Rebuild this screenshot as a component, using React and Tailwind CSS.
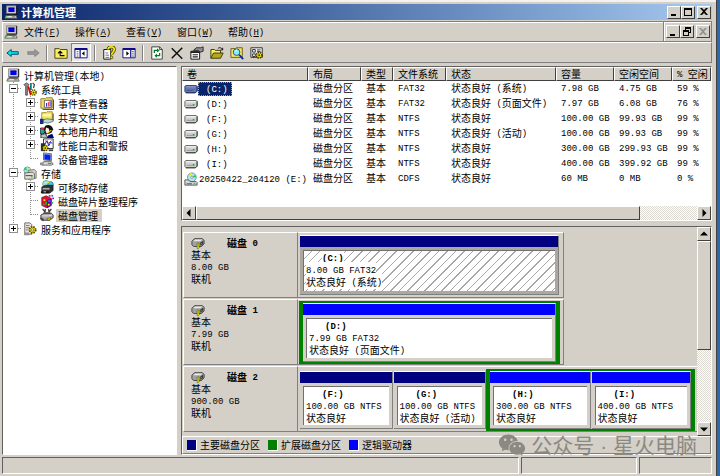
import React from "react";
import clsx from "clsx";
import { AiFillWechat } from "react-icons/ai";

const raised =
  "border border-t-white border-l-white border-b-[#404040] border-r-[#404040] bg-[#d4d0c8]";
const sunken =
  "border border-t-[#606060] border-l-[#606060] border-b-white border-r-white";
const track =
  "bg-[repeating-conic-gradient(#ffffff_0_25%,#dcd9d2_0_50%)] bg-[length:2px_2px]";

// Latin runs use a narrower monospace face than the Chinese text around them
const latin = "font-['Liberation_Mono',monospace] align-[1px] text-[9px] leading-none";

function T({ children }) {
  return children
    .split(/([\x20-\x7e]+)/)
    .filter(Boolean)
    .map((part, i) =>
      /^[\x20-\x7e]/.test(part) ? (
        <span key={i} className={latin}>
          {part}
        </span>
      ) : (
        <span key={i}>{part}</span>
      )
    );
}

function Svg({ children, className = "size-3.5" }) {
  return (
    <svg viewBox="0 0 16 16" className={clsx("block shrink-0", className)} aria-hidden="true">
      {children}
    </svg>
  );
}

const ComputerIcon = ({ className }) => (
  <Svg className={className}>
    <path d="M3 1h11v9H3z" fill="#d4d0c8" stroke="#808080" />
    <path d="M14.5 1v9.5H3" fill="none" stroke="#000" />
    <path d="M5 3h7v5H5z" fill="#0000f0" />
    <path d="M5 3h7v1H5z" fill="#000080" />
    <path d="M6 11h6v1H6z" fill="#404040" />
    <path d="M2 12h12l1 3H1z" fill="#e4e0d8" stroke="#404040" strokeWidth=".8" />
    <path d="M2 13h2v1H2z" fill="#00e000" />
    <path d="M9 13.5h4" stroke="#606060" />
  </Svg>
);

const ToolsIcon = () => (
  <Svg>
    <path d="M1 3l3-2 3 2-2 2v10H3V5z" fill="#909090" stroke="#303030" strokeWidth=".8" />
    <path d="M8 1h2v8H8z" fill="#008080" />
    <path d="M6 5l3 10" stroke="#e00000" strokeWidth="2" />
    <path d="M11 1l2 2-1 4" stroke="#404040" fill="none" strokeWidth="1.4" />
    <circle cx="12" cy="12" r="3" fill="#f0e000" stroke="#404000" strokeDasharray="1.4 1" strokeWidth="1.6" />
    <circle cx="12" cy="12" r="1" fill="#404000" />
  </Svg>
);

const EventIcon = () => (
  <Svg>
    <path d="M1 3h5l1-1h7v12H1z" fill="#f4dc60" stroke="#907820" />
    <path d="M5 5h8v8H5z" fill="#fff" stroke="#606060" />
    <path d="M7.500 8v4" stroke="#0000d0" />
    <path d="M9.500 7v5" stroke="#e00000" />
    <path d="M11.500 6v6" stroke="#0000d0" />
    <path d="M15.500 4v11.500H3" fill="none" stroke="#303000" />
  </Svg>
);

const ShareIcon = () => (
  <Svg>
    <path d="M2 3h5l1-1h6v9H2z" fill="#f8e468" stroke="#a08820" />
    <path d="M3 5h10v2H3z" fill="#fffbc0" />
    <path d="M15 4v8H7" fill="none" stroke="#303000" />
    <path d="M0 10h4v6H0z" fill="#103080" />
    <path d="M4 11l4-1 7 1v2l-6 2-5-1z" fill="#b8d8d0" stroke="#305060" strokeWidth=".7" />
  </Svg>
);

const UsersIcon = () => (
  <Svg>
    <path d="M6 2c3-2 8-1 9 4l-2 4-6 2-4-4z" fill="#101010" />
    <path d="M7 4l3 1 1 4-3 2-2-3z" fill="#f4f4e8" />
    <path d="M0 5h4l2 4-3 3-3-1z" fill="#20a0a0" stroke="#000" strokeWidth=".8" />
    <path d="M1 4h4v2H1z" fill="#e02020" />
    <path d="M1 12l5-1 3 5H1z" fill="#c0c0c0" stroke="#000" strokeWidth=".8" />
    <path d="M9 13l5-2 2 5H8z" fill="#000080" />
    <path d="M9 10l4-3" stroke="#f0d000" strokeWidth="1.2" />
  </Svg>
);

const PerfIcon = () => (
  <Svg>
    <path d="M4 1h11v11H4z" fill="#fff" stroke="#202020" />
    <path d="M5 8l3-5 2 6 2-4 2 1" fill="none" stroke="#0000d0" />
    <path d="M6 3l4 3 3-3" fill="none" stroke="#e00000" />
    <path d="M1 6h5v9H1z" fill="#303020" />
    <circle cx="6" cy="11.500" r="3" fill="#f0e000" stroke="#303000" strokeDasharray="1.500 1" strokeWidth="1.600" />
    <circle cx="6" cy="11.500" r="1" fill="#303000" />
    <path d="M10 13h5v2h-5z" fill="#404040" />
  </Svg>
);

const DeviceIcon = () => (
  <Svg>
    <path d="M4 1l9 1v8l-9-1z" fill="#c8c8d0" stroke="#606060" />
    <path d="M5 2.500l7 .5v6l-7-.5z" fill="#0020f0" />
    <path d="M4 11h9l2 3-2 1H2z" fill="#d8d8d8" stroke="#404040" strokeWidth=".8" />
    <path d="M0 12h4v3H0z" fill="#909090" />
    <path d="M9 13h4" stroke="#00a000" />
  </Svg>
);

const StorageIcon = () => (
  <Svg>
    <circle cx="5" cy="5" r="4" fill="#b0e8e0" stroke="#408080" strokeWidth=".7" />
    <path d="M5 5l3-3 1 2z" fill="#f0f000" />
    <path d="M5 5L1 4l2-3z" fill="#20d060" />
    <path d="M6 5l7-1 2 2v8l-9 1z" fill="#d8d4cc" stroke="#505050" strokeWidth=".8" />
    <path d="M2 8l9-1 2 2v5l-1 1H2z" fill="#e4e0d8" stroke="#404040" strokeWidth=".8" />
    <path d="M3 11h8" stroke="#303030" />
    <path d="M9 12.500h2" stroke="#00a000" />
  </Svg>
);

const RemovableIcon = () => (
  <Svg>
    <circle cx="7" cy="4.500" r="4" fill="#a0e8e0" stroke="#308080" strokeWidth=".7" />
    <circle cx="12" cy="5" r="3.200" fill="#40c8f0" stroke="#206080" strokeWidth=".7" />
    <path d="M7 4l2-3 2 2z" fill="#f0f020" />
    <path d="M2 8l4-2h9v6l-4 3H2z" fill="#303030" stroke="#000" strokeWidth=".6" />
    <path d="M3 9h8v2H3z" fill="#a8a8a8" />
    <path d="M1 13h9v2H1z" fill="#101010" />
    <path d="M4 13.500h3" stroke="#e0e0e0" />
  </Svg>
);

const DefragIcon = () => (
  <Svg>
    <path d="M2 4l5-2 6 3v8l-5 3-6-3z" fill="#e01030" stroke="#700020" strokeWidth=".7" />
    <path d="M8 7l5-2v8l-5 3z" fill="#7000a0" />
    <path d="M4 6h2v2H4zM9 11h2v2H9z" fill="#f0f000" />
    <path d="M6 9h2v3H6zM3 11h2v2H3z" fill="#00c040" />
    <path d="M9 7h3v2H9z" fill="#3060ff" />
    <path d="M10 1h2v2h-2zM14 4h2v2h-2z" fill="#e000c0" />
    <path d="M13 1h2v2h-2z" fill="#0080e0" />
    <path d="M13 9h2v2h-2z" fill="#00b060" />
  </Svg>
);

const DiskMgmtIcon = () => (
  <Svg>
    <path d="M3 1l3 4M13 1l-3 4M6 1v3M10 1v3" stroke="#303030" strokeWidth="1.300" />
    <path d="M4 5h8v2H4z" fill="#703030" />
    <path d="M1 8l4-2h8l2 2v3l-4 3H3l-2-2z" fill="#a8a8a8" stroke="#202020" strokeWidth=".9" />
    <path d="M2 9h8l4-1" fill="none" stroke="#f0f0f0" />
    <path d="M0 11l4 1v3l-3-1z" fill="#404040" />
    <path d="M8 12l4-1v2l-3 1z" fill="#e8e000" stroke="#404000" strokeWidth=".6" />
  </Svg>
);

const ServicesIcon = () => (
  <Svg>
    <path d="M2 1h6l2 2v11H2z" fill="#e8e4dc" stroke="#606060" />
    <path d="M3.500 4h4M3.500 6.500h4M3.500 9h3" stroke="#707070" />
    <path d="M2 12h5v3H1z" fill="#909090" />
    <circle cx="11" cy="9" r="3.500" fill="#f0e000" stroke="#504800" strokeDasharray="1.700 1.100" strokeWidth="2" />
    <circle cx="11" cy="9" r="1.300" fill="#fff" stroke="#504800" strokeWidth=".7" />
  </Svg>
);

function VolumeIcon({ selected }) {
  return (
    <Svg>
      <path
        d="M2 4h12l1 1v5l-2 2H2l-1-1V5z"
        fill={selected ? "#6878b0" : "#d0d0d0"}
        stroke={selected ? "#283870" : "#606060"}
      />
      <path d="M2.500 5.500h11" stroke={selected ? "#98a4d0" : "#fff"} />
      <path d="M3 9.500h7" stroke={selected ? "#384880" : "#909090"} />
      <path d="M10 8h2v2h-2z" fill={selected ? "#507090" : "#40a040"} />
      <path d="M15 5v5.500L13 12.500H2" fill="none" stroke={selected ? "#182858" : "#303030"} />
    </Svg>
  );
}

const CdIcon = () => (
  <Svg>
    <circle cx="9" cy="6" r="5" fill="#b0e8e8" stroke="#408090" strokeWidth=".8" />
    <path d="M9 6L6 2l3-1z" fill="#f0f000" />
    <path d="M9 6l4-3 1 3z" fill="#20d040" />
    <circle cx="9" cy="6" r="1.300" fill="#fff" stroke="#606060" strokeWidth=".6" />
    <path d="M1 9h4l2 2h7l1 1v3H1z" fill="#d8d8d8" stroke="#404040" strokeWidth=".9" />
    <path d="M3 13.500h6" stroke="#404040" />
    <path d="M11 13h2v1h-2z" fill="#00a000" />
  </Svg>
);

const DiskIcon = () => (
  <Svg>
    <path d="M1 6l3-3h9l2 2v4l-3 3H3L1 10z" fill="#a0a0a0" stroke="#303030" strokeWidth=".9" />
    <path d="M3 5.500l2-1.500h8l-2 2H3z" fill="#e8e8e8" />
    <path d="M10 8l4-3v4l-3 2.500z" fill="#404040" />
    <path d="M11 8h1.500v1.500H11z" fill="#00c000" />
    <path d="M7 8h2v4l1 1-2 1.500H7z" fill="#f0e000" stroke="#505000" strokeWidth=".6" />
  </Svg>
);

const TOOLS = [
  [
    { label: "后退", icon: <path d="M1 8l5-4v2.500h8v3H6V12z" fill="#00e8f0" stroke="#004060" /> },
    { label: "前进", icon: <path d="M15 8l-5-4v2.500H2v3h8V12z" fill="#989898" stroke="#808080" /> },
  ],
  [
    {
      label: "向上",
      icon: (
        <>
          <path d="M1 3h5l1 1h8v10H1z" fill="#f8f060" stroke="#403800" />
          <path d="M7 11V7M4.500 8.500L7 6l2.500 2.500M7 11h5" fill="none" stroke="#000" strokeWidth="1.300" />
        </>
      ),
    },
    {
      label: "显示/隐藏控制台树",
      pressed: true,
      icon: (
        <>
          <path d="M1 3h14v10.500H1z" fill="#fff" stroke="#000080" />
          <path d="M1 2.500h14v2H1z" fill="#000080" />
          <path d="M7 4v9" stroke="#000080" strokeWidth="1.300" />
          <path d="M3 6.500h2M3 9h2M3 11.500h2" stroke="#404040" />
          <path d="M12 6v5L9 8.500z" fill="#000" />
        </>
      ),
    },
  ],
  [
    {
      label: "帮助",
      icon: (
        <>
          <path d="M2 4h8v11H2z" fill="#fff" stroke="#000" />
          <path d="M4 8h3M4 10.500h4M4 13h4" stroke="#606060" />
          <path d="M7 4c0-4 7-4 7 0 0 3-3 3-3 6" fill="none" stroke="#303000" strokeWidth="3.600" />
          <path d="M7 4c0-4 7-4 7 0 0 3-3 3-3 6" fill="none" stroke="#f8e800" strokeWidth="2" />
          <circle cx="11" cy="13" r="1.500" fill="#f8e800" stroke="#303000" strokeWidth=".8" />
        </>
      ),
    },
    {
      label: "显示/隐藏操作窗格",
      icon: (
        <>
          <path d="M1 3h14v10.500H1z" fill="#fff" stroke="#000080" />
          <path d="M1 2.500h14v2H1z" fill="#000080" />
          <path d="M10 4v9" stroke="#000080" strokeWidth="1.300" />
          <path d="M11.500 6.500h2M11.500 9h2M11.500 11.500h2" stroke="#404040" />
          <path d="M5 6v5l3-2.500z" fill="#000" />
        </>
      ),
    },
  ],
  [
    {
      label: "刷新",
      icon: (
        <>
          <path d="M2 1h9l3 3v11H2z" fill="#fff" stroke="#303030" />
          <path d="M11 1v3h3" fill="none" stroke="#303030" />
          <path d="M5 8V5h4M11 8v3H7" fill="none" stroke="#008020" strokeWidth="1.500" />
          <path d="M8 2.500L11 5 8 7.500zM8 8.500L5 11l3 2.500z" fill="#008020" />
        </>
      ),
    },
    {
      label: "删除",
      icon: <path d="M2 2.500l12 12M14 2L2 14" stroke="#101010" strokeWidth="1.700" />,
    },
    {
      label: "属性",
      icon: (
        <>
          <path d="M1 6h10v9H1z" fill="#fff" stroke="#000" />
          <path d="M1 6h10v2H1z" fill="#202020" />
          <path d="M3 10h6M3 12.500h6" stroke="#202020" strokeWidth="1.300" />
          <path d="M4 5l3-3h5l3-1v5l-3 1-3-2H7z" fill="#909090" stroke="#202020" />
        </>
      ),
    },
    {
      label: "打开",
      icon: (
        <>
          <path d="M1 14V4h4l1 1h6v3" fill="#f8f060" stroke="#303000" />
          <path d="M1 14l3-6h11l-3 6z" fill="#b8a820" stroke="#303000" />
          <path d="M9 3c2-2 4-1 5 1M14.500 2v2.500H12" fill="none" stroke="#000" />
        </>
      ),
    },
    {
      label: "查找",
      icon: (
        <>
          <path d="M1 3h5l1-1h7v11H1z" fill="#f8e860" stroke="#605010" />
          <circle cx="7.500" cy="7" r="3.800" fill="#80f0f8" stroke="#204080" />
          <path d="M6 6l2-1.500" stroke="#fff" />
          <path d="M10.500 10l4.500 5" stroke="#0020c0" strokeWidth="2" />
        </>
      ),
    },
    {
      label: "设置",
      icon: (
        <>
          <path d="M1 2h13v11H1z" fill="#f0f0f0" stroke="#202020" />
          <path d="M3 4h3v3H3zM3 9h3v3H3z" fill="#fff" stroke="#202020" />
          <path d="M8 4.500h4M8 6.500h4" stroke="#202020" />
          <circle cx="10.500" cy="10.500" r="3.200" fill="#f0e000" stroke="#403800" strokeDasharray="1.600 1" strokeWidth="1.800" />
          <circle cx="10.500" cy="10.500" r="1.100" fill="#403800" />
        </>
      ),
    },
  ],
];

const MENUS = [
  ["文件", "F"],
  ["操作", "A"],
  ["查看", "V"],
  ["窗口", "W"],
  ["帮助", "H"],
];

// guides: one entry per indent column. "line" passes through, "tee"/"end" branch off
const TREE = [
  { text: "计算机管理(本地)", icon: <ComputerIcon />, guides: [] },
  { text: "系统工具", icon: <ToolsIcon />, guides: ["tee"], sign: "-" },
  { text: "事件查看器", icon: <EventIcon />, guides: ["line", "tee"], sign: "+" },
  { text: "共享文件夹", icon: <ShareIcon />, guides: ["line", "tee"], sign: "+" },
  { text: "本地用户和组", icon: <UsersIcon />, guides: ["line", "tee"], sign: "+" },
  { text: "性能日志和警报", icon: <PerfIcon />, guides: ["line", "tee"], sign: "+" },
  { text: "设备管理器", icon: <DeviceIcon />, guides: ["line", "end"] },
  { text: "存储", icon: <StorageIcon />, guides: ["tee"], sign: "-" },
  { text: "可移动存储", icon: <RemovableIcon />, guides: ["line", "tee"], sign: "+" },
  { text: "磁盘碎片整理程序", icon: <DefragIcon />, guides: ["line", "tee"] },
  { text: "磁盘管理", icon: <DiskMgmtIcon />, guides: ["line", "end"], selected: true },
  { text: "服务和应用程序", icon: <ServicesIcon />, guides: ["end"], sign: "+" },
];

const COLUMNS = ["卷", "布局", "类型", "文件系统", "状态", "容量", "空闲空间", "% 空闲"];

const VOLUMES = [
  ["(C:)", "磁盘分区", "基本", "FAT32", "状态良好 (系统)", "7.98 GB", "4.75 GB", "59 %"],
  ["(D:)", "磁盘分区", "基本", "FAT32", "状态良好 (页面文件)", "7.97 GB", "6.08 GB", "76 %"],
  ["(F:)", "磁盘分区", "基本", "NTFS", "状态良好", "100.00 GB", "99.93 GB", "99 %"],
  ["(G:)", "磁盘分区", "基本", "NTFS", "状态良好 (活动)", "100.00 GB", "99.93 GB", "99 %"],
  ["(H:)", "磁盘分区", "基本", "NTFS", "状态良好", "300.00 GB", "299.93 GB", "99 %"],
  ["(I:)", "磁盘分区", "基本", "NTFS", "状态良好", "400.00 GB", "399.92 GB", "99 %"],
  ["20250422_204120 (E:)", "磁盘分区", "基本", "CDFS", "状态良好", "60 MB", "0 MB", "0 %"],
];

const LEGEND = [
  ["主要磁盘分区", "bg-[#000080]"],
  ["扩展磁盘分区", "bg-[#008000]"],
  ["逻辑驱动器", "bg-[#0000ff]"],
];

const CAPTION_GLYPHS = {
  最小化: <path d="M2 7h5v2H2z" />,
  最大化: <path d="M1 1h8v8H1zM2 3v5h6V3z" fillRule="evenodd" />,
  还原: <path d="M3 0h6v6H7v3H1V3h2zM4 2v1h3v2h1V2zM2 5v3h4V5z" fillRule="evenodd" />,
  关闭: <path d="M1 1h2l2 2 2-2h2L6 4.500 9 8H7L5 6 3 8H1l3-3.500z" />,
};

function CaptionButton({ label, name, disabled, className }) {
  return (
    <button
      type="button"
      aria-label={name}
      disabled={disabled}
      className={clsx("flex h-[13px] w-3.5 items-center justify-center", raised, className)}
    >
      <svg viewBox="0 0 10 10" className={clsx("size-2.5", disabled ? "fill-[#909090]" : "fill-black")}>
        {CAPTION_GLYPHS[label]}
      </svg>
    </button>
  );
}

function ScrollButton({ label, path }) {
  return (
    <button
      type="button"
      aria-label={label}
      className={clsx("flex size-3.5 shrink-0 items-center justify-center", raised)}
    >
      <svg viewBox="0 0 8 8" className="size-2">
        <path d={path} />
      </svg>
    </button>
  );
}

function Guide({ type, sign, text }) {
  const drawing = (
    <svg viewBox="0 0 17 14" className="block h-3.5 w-[17px]" shapeRendering="crispEdges" aria-hidden="true">
      <path
        d={type === "end" ? "M8.500 0v7" : "M8.500 0v14"}
        stroke="#909090"
        strokeDasharray="1 1"
      />
      {type !== "line" && <path d="M9 6.500h8" stroke="#909090" strokeDasharray="1 1" />}
      {sign && (
        <>
          <path d="M4 2h9v9H4z" fill="#909090" />
          <path d="M5 3h7v7H5z" fill="#fff" />
          <path d="M6 6h5v1H6z" fill="#000" />
          {sign === "+" && <path d="M8 4h1v5H8z" fill="#000" />}
        </>
      )}
    </svg>
  );
  if (!sign) return drawing;
  return (
    <button type="button" aria-label={(sign === "+" ? "展开" : "折叠") + text}>
      {drawing}
    </button>
  );
}

function Tree() {
  return (
    <ul className={clsx("w-[175px] shrink-0 bg-white pt-px pl-0.5", sunken)}>
      {TREE.map((node) => (
        <li key={node.text} className="flex h-3.5 items-center">
          {node.guides.map((type, i) => (
            <Guide
              key={i}
              type={type}
              text={node.text}
              sign={i === node.guides.length - 1 ? node.sign : undefined}
            />
          ))}
          <span className="ml-px">{node.icon}</span>
          <span className={clsx("ml-0.5 px-0.5 leading-[13px]", node.selected && "bg-[#d4d0c8] pr-1")}>
            <T>{node.text}</T>
          </span>
        </li>
      ))}
    </ul>
  );
}

function VolumeList() {
  return (
    <section className={clsx("flex h-[155px] flex-col bg-white", sunken)}>
      <table className="w-full table-fixed border-collapse text-left">
        <colgroup>
          <col className="w-[126px]" />
          <col className="w-[53px]" />
          <col className="w-8" />
          <col className="w-[53px]" />
          <col className="w-[110px]" />
          <col className="w-[58px]" />
          <col className="w-[58px]" />
          <col />
        </colgroup>
        <thead>
          <tr>
            {COLUMNS.map((c) => (
              <th key={c} className="p-0 font-normal">
                <div className={clsx("h-3.5 overflow-hidden pl-1 leading-3", raised)}>
                  <T>{c}</T>
                </div>
              </th>
            ))}
          </tr>
        </thead>
        <tbody>
          {VOLUMES.map(([name, ...cells], row) => (
            <tr key={name}>
              <td className="p-0">
                <div className="flex h-[15px] items-center pl-0.5">
                  {name.length > 4 ? <CdIcon /> : <VolumeIcon selected={row === 0} />}
                  <span
                    className={clsx(
                      "leading-[14px]",
                      name.length > 4 ? "pl-px" : "pr-1 pl-2",
                      row === 0 && "bg-[#0a246a] text-white outline-1 -outline-offset-1 outline-dotted outline-[#c0a850]"
                    )}
                  >
                    <T>{name}</T>
                  </span>
                </div>
              </td>
              {cells.map((cell, i) => (
                <td key={i} className="p-0">
                  <div className="h-[15px] pl-[5px] leading-[14px]">
                    <T>{cell}</T>
                  </div>
                </td>
              ))}
            </tr>
          ))}
        </tbody>
      </table>
      <div className={clsx("mt-auto flex h-3.5", track)}>
        <ScrollButton label="向左滚动" path="M5.500 0v8l-4-4z" />
        <div className={clsx("w-[84%]", raised)} />
        <div className="flex-1" />
        <ScrollButton label="向右滚动" path="M2.500 0v8l4-4z" />
      </div>
    </section>
  );
}

function Partition({ name, size, status, logical, selected, className }) {
  return (
    <div className={clsx("flex min-w-0 flex-col", className)}>
      <div
        className={clsx(
          "h-3 border-t border-r border-t-white border-r-[#808080]",
          logical ? "bg-[#0000ff]" : "bg-[#000080]"
        )}
      />
      <div
        className={clsx(
          "flex flex-1 border-r border-b border-[#808080] p-[3px]",
          selected ? "bg-[#aca8a0]" : "bg-[#d4d0c8]"
        )}
      >
        <div
          className={clsx(
            "flex-1 overflow-hidden border-t border-l border-[#707070] pt-px pl-0.5 leading-3",
            selected
              ? "bg-[repeating-linear-gradient(135deg,#ffffff_0_5px,#a8a8a8_5px_6px)]"
              : "bg-white"
          )}
        >
          <p className="pl-4 font-bold">
            <span className={clsx(selected && "bg-white")}>
              <T>{name}</T>
            </span>
          </p>
          <p>
            <span className={clsx(selected && "bg-white")}>
              <T>{size}</T>
            </span>
          </p>
          <p>
            <span className={clsx(selected && "bg-white")}>
              <T>{status}</T>
            </span>
          </p>
        </div>
      </div>
    </div>
  );
}

function DiskRow({ index, size, children }) {
  return (
    <div className="flex h-[66px]">
      <div className="w-[115px] shrink-0 border border-t-white border-r-[#808080] border-b-[#808080] border-l-white pt-1 pl-[7px] leading-3">
        <h3 className="flex h-3 items-center gap-[22px] font-bold">
          <DiskIcon />
          <span>
            <T>{`磁盘 ${index}`}</T>
          </span>
        </h3>
        <p>基本</p>
        <p>
          <T>{size}</T>
        </p>
        <p>联机</p>
      </div>
      <div className="flex min-w-0 flex-1">{children}</div>
    </div>
  );
}

function DiskView() {
  const area = "border-t border-r border-b border-t-white border-r-[#808080] border-b-[#808080]";
  const extended = "border-x-4 border-y-2 border-[#008000]";

  return (
    <section className={clsx("mt-[5px] flex flex-1 flex-col bg-[#d4d0c8]", sunken)}>
      <div className="flex flex-1">
        <div className="flex min-w-0 flex-1 flex-col gap-px pt-[5px] pb-1 pl-px">
          <DiskRow index={0} size="8.00 GB">
            <div className={clsx("flex w-2/3 pt-0.5 pr-1 pb-0.5 pl-0.5", area)}>
              <Partition className="flex-1" name="(C:)" size="8.00 GB FAT32" status="状态良好 (系统)" selected />
            </div>
          </DiskRow>
          <DiskRow index={1} size="7.99 GB">
            <div className={clsx("flex w-2/3 pt-px pr-[3px] pl-px", area)}>
              <div className={clsx("flex flex-1", extended)}>
                <Partition className="flex-1" name="(D:)" size="7.99 GB FAT32" status="状态良好 (页面文件)" logical />
              </div>
            </div>
          </DiskRow>
          <DiskRow index={2} size="900.00 GB">
            <div className="grid w-full grid-cols-[94fr_94fr_210fr] border-y border-t-white border-b-[#808080] pt-0.5 pr-0.5 pl-px">
              <Partition className="pt-0.5 pb-0.5 pl-px" name="(F:)" size="100.00 GB NTFS" status="状态良好" />
              <Partition className="pt-0.5 pb-0.5 pl-px" name="(G:)" size="100.00 GB NTFS" status="状态良好 (活动)" />
              <div className={clsx("grid grid-cols-2", extended)}>
                <Partition name="(H:)" size="300.00 GB NTFS" status="状态良好" logical />
                <Partition className="pl-px" name="(I:)" size="400.00 GB NTFS" status="状态良好" logical />
              </div>
            </div>
          </DiskRow>
        </div>
        <div className={clsx("flex w-3.5 shrink-0 flex-col", track)}>
          <ScrollButton label="向上滚动" path="M0 5.500h8l-4-4z" />
          <div className={clsx("h-[52%]", raised)} />
          <div className="flex-1" />
          <ScrollButton label="向下滚动" path="M0 2.500h8l-4 4z" />
        </div>
      </div>
      <ul className="flex h-[18px] items-center gap-2 border border-t-white border-r-[#808080] border-b-[#808080] border-l-white pl-1">
        {LEGEND.map(([label, color]) => (
          <li key={label} className="flex items-center gap-[3px] leading-3">
            <span className={clsx("h-[11px] w-2.5 border-r border-b border-white", color)} />
            {label}
          </li>
        ))}
      </ul>
    </section>
  );
}

export default function App() {
  return (
    <div className="flex min-h-screen bg-[#2f68a8] pr-[3px] font-['Noto_Sans_CJK_SC',sans-serif] text-[10px] whitespace-pre text-black">
      <div className="relative flex min-w-0 flex-1 flex-col border-r border-[#404040] bg-[#d4d0c8] pt-1 pr-1 pb-0.5 pl-0.5 shadow-[inset_0_2px_0_#f4f2ee]">
        <header className="flex h-4 items-center bg-linear-to-r from-[#0a246a] to-[#a6caf0] pr-px pl-0.5 text-white">
          <ComputerIcon className="size-3.5" />
          <h1 className="ml-[3px] text-[11px] leading-4 font-bold">计算机管理</h1>
          <CaptionButton label="最小化" name="最小化" className="ml-auto" />
          <CaptionButton label="最大化" name="最大化" />
          <CaptionButton label="关闭" name="关闭" className="ml-0.5" />
        </header>

        <nav className="mt-px flex h-[21px] items-center border border-t-[#808080] border-r-[#808080] border-b-[#808080] border-l-white pl-px shadow-[inset_0_1px_0_#ffffff]">
          <ComputerIcon className="size-3.5" />
          <div className="ml-1.5 flex gap-3.5">
            {MENUS.map(([label, key]) => (
              <button key={key} type="button" className="w-[37px] text-left leading-4">
                {label}
                <span className={latin}>
                  (<u>{key}</u>)
                </span>
              </button>
            ))}
          </div>
          <div className="ml-auto flex h-full items-center border-l border-white pr-px pl-px shadow-[-1px_0_0_#808080]">
            <CaptionButton label="最小化" name="最小化子窗口" />
            <CaptionButton label="还原" name="还原子窗口" />
            <CaptionButton label="关闭" name="关闭子窗口" disabled className="ml-0.5" />
          </div>
        </nav>

        <div
          role="toolbar"
          aria-label="工具栏"
          className="flex h-[21px] items-center border border-t-white border-r-[#808080] border-b-[#808080] border-l-white"
        >
          {TOOLS.map((group, g) => (
            <div key={g} className="flex items-center">
              {g > 0 && <span className="mx-[3px] h-4 w-0.5 border-r border-l border-r-white border-l-[#808080]" />}
              {group.map((tool) => (
                <button
                  key={tool.label}
                  type="button"
                  aria-label={tool.label}
                  className={clsx(
                    "flex h-[19px] w-5 items-center justify-center",
                    tool.pressed && "border border-t-[#808080] border-r-white border-b-white border-l-[#808080] bg-[#eae8e4]"
                  )}
                >
                  <Svg>{tool.icon}</Svg>
                </button>
              ))}
            </div>
          ))}
        </div>

        <main className="mt-[3px] flex flex-1 gap-1">
          <Tree />
          <div className="flex min-w-0 flex-1 flex-col">
            <VolumeList />
            <DiskView />
          </div>
        </main>

        <footer className="mt-0.5 flex h-[17px] gap-0.5">
          <div className={clsx("flex-1", sunken)} />
          <div className={clsx("w-[116px]", sunken)} />
          <div className={clsx("w-[73px]", sunken)} />
        </footer>

        <div className="absolute right-[19px] bottom-4 flex items-center gap-1 text-[21px] leading-[22px] text-[#8c8983]">
          <AiFillWechat className="size-[30px]" />
          <span>
            公众号<span className="font-['Liberation_Sans',sans-serif]"> · </span>星火电脑
          </span>
        </div>
      </div>
    </div>
  );
}
